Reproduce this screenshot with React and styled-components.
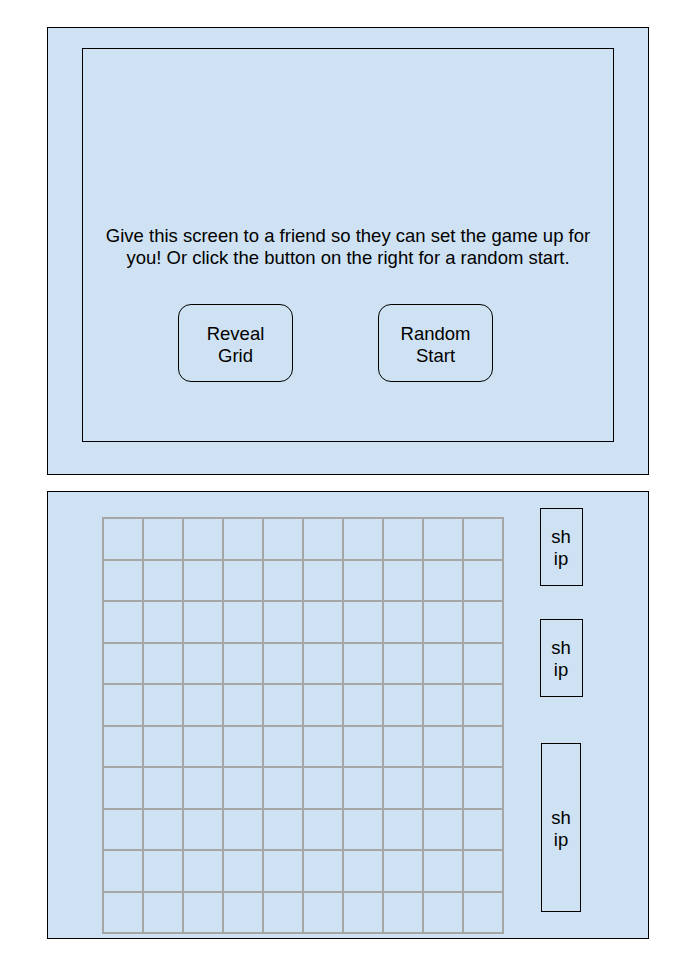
import styled, { createGlobalStyle } from 'styled-components'

const GlobalStyle = createGlobalStyle`
    body {
        margin: 0;
        background: #ffffff;
        font-family: "Liberation Sans", Arial, sans-serif;
    }
`

const Page = styled.div`
    display: flex;
    flex-direction: column;
    gap: 16px;
    padding: 27px 0 0 47px;
`

const Panel = styled.div`
    box-sizing: border-box;
    width: 602px;
    height: ${p => p.$h}px;
    border: 1px solid #000;
    background-color: #cfe2f3;
`

const SetupPanel = styled(Panel)`
    padding: 20px 34px 0 34px;
`

const Screen = styled.div`
    box-sizing: border-box;
    height: 394px;
    border: 1px solid #000;
    padding-top: 176px;
    display: flex;
    flex-direction: column;
`

const Message = styled.p`
    margin: 0;
    font-size: 18.5px;
    line-height: 22px;
    text-align: center;
    color: #000;
`

const ButtonRow = styled.div`
    display: flex;
    gap: 85px;
    margin-top: 35px;
    padding-left: 95px;
`

const Button = styled.div`
    box-sizing: border-box;
    width: 115px;
    height: 78px;
    padding-top: 3px;
    border: 1px solid #000;
    border-radius: 13px;
    display: flex;
    align-items: center;
    justify-content: center;
    text-align: center;
    font-size: 18.5px;
    line-height: 22px;
    color: #000;
`

const BoardPanel = styled(Panel)`
    display: flex;
    padding: 25px 0 0 54px;
`

const Grid = styled.div`
    box-sizing: border-box;
    width: 402px;
    height: 417px;
    padding: 2px;
    gap: 2px;
    display: grid;
    grid-template-columns: repeat(10, 1fr);
    grid-template-rows: repeat(10, 1fr);
    background-color: #a6a6a6;
`

const Cell = styled.div`
    background-color: #cfe2f3;
`

const Dock = styled.div`
    display: flex;
    flex-direction: column;
    align-items: center;
    width: 44px;
    margin-left: 35px;
    margin-top: -9px;
`

const Ship = styled.div`
    box-sizing: border-box;
    width: ${p => p.$w}px;
    height: ${p => p.$h}px;
    margin-top: ${p => p.$top}px;
    padding-top: 2px;
    border: 1px solid #000;
    display: flex;
    align-items: center;
    justify-content: center;
    text-align: center;
    font-size: 18.5px;
    line-height: 22px;
    color: #000;
`

const ships = [
    { w: 43, h: 78, top: 0 },
    { w: 43, h: 78, top: 33 },
    { w: 40, h: 169, top: 46 },
]

export default function App() {
    return (
        <>
            <GlobalStyle />
            <Page>
                <SetupPanel $h={448}>
                    <Screen>
                        <Message>
                            Give this screen to a friend so they can set the game up for
                            <br />
                            you! Or click the button on the right for a random start.
                        </Message>
                        <ButtonRow>
                            <Button>Reveal<br />Grid</Button>
                            <Button>Random<br />Start</Button>
                        </ButtonRow>
                    </Screen>
                </SetupPanel>
                <BoardPanel $h={448}>
                    <Grid>
                        {Array.from({ length: 100 }, (_, i) => <Cell key={i} />)}
                    </Grid>
                    <Dock>
                        {ships.map((s, i) => (
                            <Ship key={i} $w={s.w} $h={s.h} $top={s.top}>sh<br />ip</Ship>
                        ))}
                    </Dock>
                </BoardPanel>
            </Page>
        </>
    )
}
